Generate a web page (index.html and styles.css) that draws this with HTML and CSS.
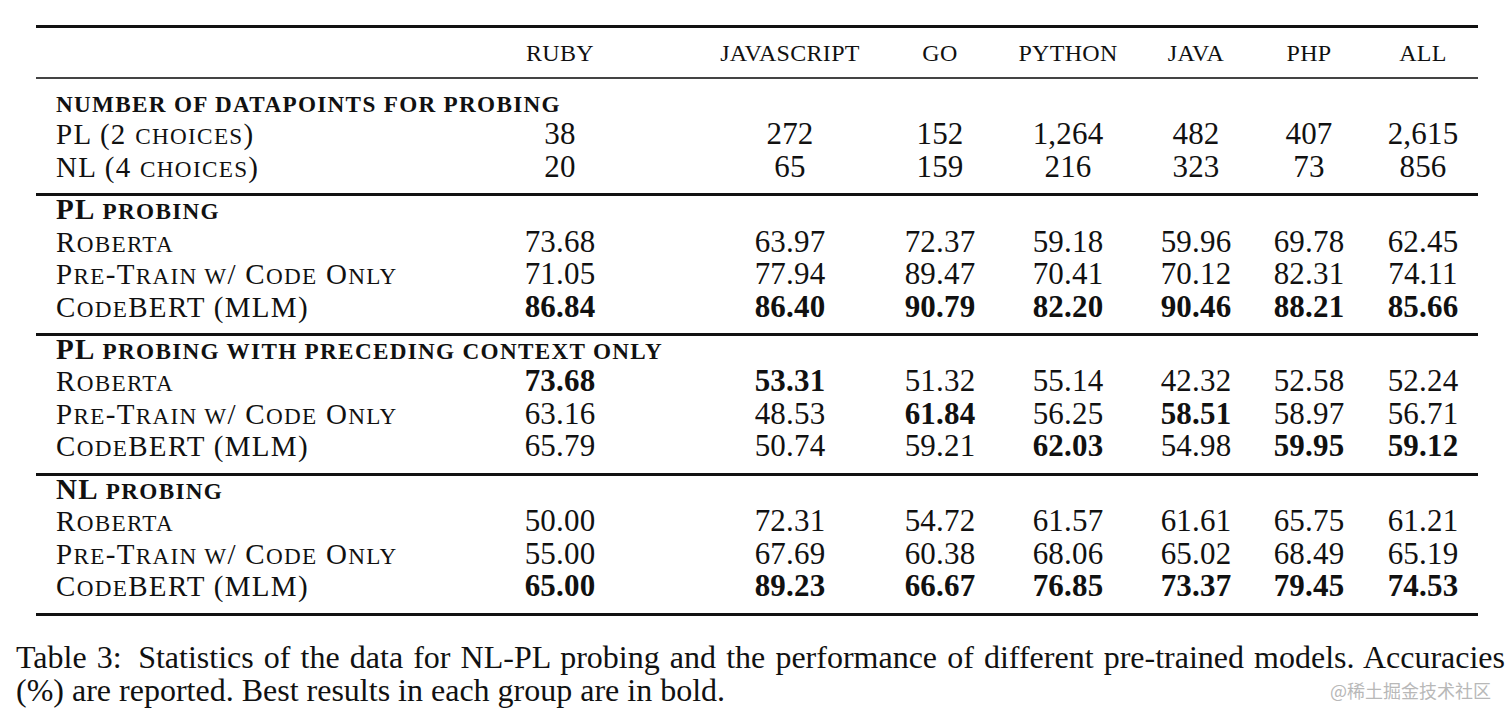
FILE: index.html
```html
<!DOCTYPE html>
<html lang="en">
<head>
<meta charset="utf-8">
<title>Table 3</title>
<link rel="stylesheet" href="styles.css">
</head>
<body>
<div class="table">
  <div class="row head">
    <div class="cell"></div>
    <div class="cell num">RUBY</div>
    <div class="cell num">JAVASCRIPT</div>
    <div class="cell num">GO</div>
    <div class="cell num">PYTHON</div>
    <div class="cell num">JAVA</div>
    <div class="cell num">PHP</div>
    <div class="cell num">ALL</div>
  </div>

  <div class="group first">
    <div class="row body-row"><div class="cell ghead"><span class="sc">NUMBER OF DATAPOINTS FOR PROBING</span></div></div>
    <div class="row body-row">
      <div class="cell label">PL (2 <span class="sc">CHOICES</span>)</div>
      <div class="cell num">38</div><div class="cell num">272</div><div class="cell num">152</div><div class="cell num">1,264</div><div class="cell num">482</div><div class="cell num">407</div><div class="cell num">2,615</div>
    </div>
    <div class="row body-row">
      <div class="cell label">NL (4 <span class="sc">CHOICES</span>)</div>
      <div class="cell num">20</div><div class="cell num">65</div><div class="cell num">159</div><div class="cell num">216</div><div class="cell num">323</div><div class="cell num">73</div><div class="cell num">856</div>
    </div>
  </div>

  <div class="group">
    <div class="row body-row"><div class="cell ghead">PL <span class="sc">PROBING</span></div></div>
    <div class="row body-row">
      <div class="cell label">R<span class="sc">OBERTA</span></div>
      <div class="cell num">73.68</div><div class="cell num">63.97</div><div class="cell num">72.37</div><div class="cell num">59.18</div><div class="cell num">59.96</div><div class="cell num">69.78</div><div class="cell num">62.45</div>
    </div>
    <div class="row body-row">
      <div class="cell label">P<span class="sc">RE</span>-T<span class="sc">RAIN W</span>/ C<span class="sc">ODE</span> O<span class="sc">NLY</span></div>
      <div class="cell num">71.05</div><div class="cell num">77.94</div><div class="cell num">89.47</div><div class="cell num">70.41</div><div class="cell num">70.12</div><div class="cell num">82.31</div><div class="cell num">74.11</div>
    </div>
    <div class="row body-row">
      <div class="cell label">C<span class="sc">ODE</span>BERT (MLM)</div>
      <div class="cell num best">86.84</div><div class="cell num best">86.40</div><div class="cell num best">90.79</div><div class="cell num best">82.20</div><div class="cell num best">90.46</div><div class="cell num best">88.21</div><div class="cell num best">85.66</div>
    </div>
  </div>

  <div class="group">
    <div class="row body-row"><div class="cell ghead">PL <span class="sc">PROBING WITH PRECEDING CONTEXT ONLY</span></div></div>
    <div class="row body-row">
      <div class="cell label">R<span class="sc">OBERTA</span></div>
      <div class="cell num best">73.68</div><div class="cell num best">53.31</div><div class="cell num">51.32</div><div class="cell num">55.14</div><div class="cell num">42.32</div><div class="cell num">52.58</div><div class="cell num">52.24</div>
    </div>
    <div class="row body-row">
      <div class="cell label">P<span class="sc">RE</span>-T<span class="sc">RAIN W</span>/ C<span class="sc">ODE</span> O<span class="sc">NLY</span></div>
      <div class="cell num">63.16</div><div class="cell num">48.53</div><div class="cell num best">61.84</div><div class="cell num">56.25</div><div class="cell num best">58.51</div><div class="cell num">58.97</div><div class="cell num">56.71</div>
    </div>
    <div class="row body-row">
      <div class="cell label">C<span class="sc">ODE</span>BERT (MLM)</div>
      <div class="cell num">65.79</div><div class="cell num">50.74</div><div class="cell num">59.21</div><div class="cell num best">62.03</div><div class="cell num">54.98</div><div class="cell num best">59.95</div><div class="cell num best">59.12</div>
    </div>
  </div>

  <div class="group last">
    <div class="row body-row"><div class="cell ghead">NL <span class="sc">PROBING</span></div></div>
    <div class="row body-row">
      <div class="cell label">R<span class="sc">OBERTA</span></div>
      <div class="cell num">50.00</div><div class="cell num">72.31</div><div class="cell num">54.72</div><div class="cell num">61.57</div><div class="cell num">61.61</div><div class="cell num">65.75</div><div class="cell num">61.21</div>
    </div>
    <div class="row body-row">
      <div class="cell label">P<span class="sc">RE</span>-T<span class="sc">RAIN W</span>/ C<span class="sc">ODE</span> O<span class="sc">NLY</span></div>
      <div class="cell num">55.00</div><div class="cell num">67.69</div><div class="cell num">60.38</div><div class="cell num">68.06</div><div class="cell num">65.02</div><div class="cell num">68.49</div><div class="cell num">65.19</div>
    </div>
    <div class="row body-row">
      <div class="cell label">C<span class="sc">ODE</span>BERT (MLM)</div>
      <div class="cell num best">65.00</div><div class="cell num best">89.23</div><div class="cell num best">66.67</div><div class="cell num best">76.85</div><div class="cell num best">73.37</div><div class="cell num best">79.45</div><div class="cell num best">74.53</div>
    </div>
  </div>
</div>

<p class="caption"><span class="cap-label">Table 3:</span> Statistics of the data for NL-PL probing and the performance of different pre-trained models. Accuracies (%) are reported. Best results in each group are in bold.</p>

<div class="watermark">@稀土掘金技术社区</div>
</body>
</html>
```

FILE: styles.css
```css
* {
  box-sizing: border-box;
}

html,
body {
  margin: 0;
  padding: 0;
  background: #ffffff;
}

body {
  position: relative;
  width: 1512px;
  height: 720px;
  overflow: hidden;
  font-family: "Liberation Serif", "Times New Roman", serif;
  color: #111111;
}

.table {
  margin: 25px 0 0 36px;
  width: 1442px;
  border-top: 3px solid #111111;
}

.row {
  display: grid;
  grid-template-columns: 390px 268px 192px 108px 148px 108px 118px 110px;
}

.cell {
  white-space: nowrap;
}

.num {
  text-align: center;
}

.head {
  height: 51px;
  padding-top: 1px;
  font-size: 24px;
  line-height: 48px;
  letter-spacing: 0.3px;
  border-bottom: 2px solid #444444;
}

.body-row {
  height: 32.5px;
  font-size: 29px;
  line-height: 32.5px;
  letter-spacing: 1.3px;
}

.body-row .num {
  font-size: 31px;
  letter-spacing: 0.2px;
}

.label {
  padding-left: 20px;
}

.ghead {
  grid-column: 1 / -1;
  padding-left: 20px;
  font-weight: bold;
}

.sc {
  font-size: 0.8em;
  line-height: 1;
}

.best {
  font-weight: bold;
}

.group {
  border-top: 3px solid #111111;
  padding-bottom: 10px;
}

.group > .row:first-child {
  margin-top: -3.2px;
}

.group.first {
  border-top: 0;
  padding-top: 6.8px;
}

.group.first > .row:first-child {
  margin-top: 0;
}

.group.last {
  border-bottom: 3px solid #111111;
}

.caption {
  margin: 25px 0 0 16px;
  width: 1489px;
  font-size: 32px;
  line-height: 33.4px;
  text-align: justify;
  color: #111111;
}

.cap-label {
  margin-right: 0.2em;
}

.watermark {
  position: absolute;
  left: 1330px;
  top: 680px;
  font-family: "Noto Sans CJK SC", "Noto Sans", sans-serif;
  font-size: 18px;
  line-height: 20px;
  color: #b8b8b8;
}
```
